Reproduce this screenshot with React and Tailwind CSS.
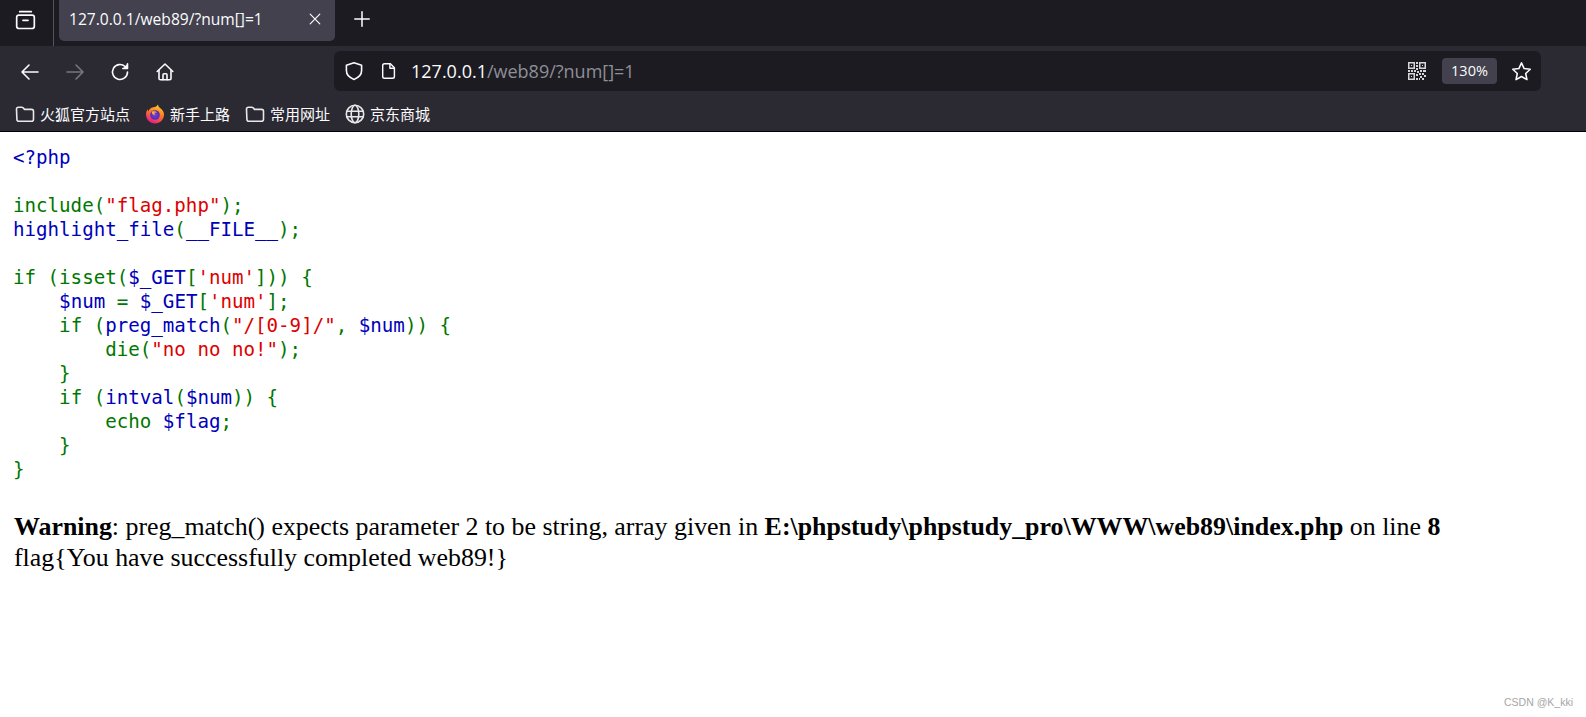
import React from 'react';

const uiFont = "font-['Open_Sans','Noto_Sans_CJK_SC',sans-serif]";

const G = ({ children }) => <span className="text-[#007700]">{children}</span>;
const B = ({ children }) => <span className="text-[#0000bb]">{children}</span>;
const R = ({ children }) => <span className="text-[#dd0000]">{children}</span>;

const Icon = ({ className = '', children, size = 20, strokeWidth = 1.6 }) => (
  <svg
    width={size}
    height={size}
    viewBox="0 0 20 20"
    fill="none"
    stroke="currentColor"
    strokeWidth={strokeWidth}
    strokeLinecap="round"
    strokeLinejoin="round"
    className={`shrink-0 ${className}`}
  >
    {children}
  </svg>
);

const FolderIcon = () => (
  <Icon className="text-[#e8e8ea]">
    <path d="M1.5 5.2c0-1.2.8-2 2-2h3.2c.6 0 1 .2 1.4.6l1.4 1.6h7c1.2 0 2 .8 2 2v7.8c0 1.2-.8 2-2 2h-12.6c-1.2 0-2-.8-2-2z" />
  </Icon>
);

const GlobeIcon = () => (
  <Icon className="text-[#e8e8ea]">
    <circle cx="10" cy="10" r="8.7" />
    <ellipse cx="10" cy="10" rx="3.8" ry="8.7" />
    <path d="M1.6 7.2h16.8M1.6 12.8h16.8" />
  </Icon>
);

const FirefoxIcon = () => (
  <svg width="20" height="20" viewBox="0 0 20 20" className="shrink-0">
    <defs>
      <linearGradient id="ffOuter" x1="0.7" y1="0" x2="0.3" y2="1">
        <stop offset="0" stopColor="#ffd12e" />
        <stop offset="0.45" stopColor="#ff7a1f" />
        <stop offset="1" stopColor="#e3168a" />
      </linearGradient>
      <radialGradient id="ffInner" cx="0.5" cy="0.5" r="0.5">
        <stop offset="0" stopColor="#7b3fe0" />
        <stop offset="1" stopColor="#4a2bb5" />
      </radialGradient>
    </defs>
    <path
      d="M13 .4c.2 2 1.4 3 2.7 4.2 1.9 1.700 3.300 3.300 3.300 6 0 5-4 9-9 9s-9-4-9-9c0-2 .6-3.800 1.700-5.300.2.900.5 1.500 1 2 .3-1.900 1.600-3 3.300-3.800C9.500 3 12.200 2.500 13 .4z"
      fill="url(#ffOuter)"
    />
    <circle cx="10" cy="11" r="4.800" fill="url(#ffInner)" />
    <path d="M6.600 7.800c2-.9 4.200-.5 5.600.9-1.200-.3-2.400-.2-3.300.4.800.200 1.100.8 1 1.400-.9.500-1.700.300-2.300-.3-.5-.7-.7-1.500-1-2.400z" fill="#ffb13b" />
  </svg>
);

const ArchiveIcon = () => (
  <Icon className="text-[#fbfbfe]" size={21}>
    <path d="M4.500 1.600h11" />
    <rect x="1.600" y="4.800" width="16.800" height="12.800" rx="2.200" />
    <path d="M7.600 9.800h4.800" />
  </Icon>
);

const QrIcon = () => (
  <svg width="18" height="18" viewBox="0 0 18 18" className="shrink-0 text-[#d6d6d8]" fill="currentColor">
    <path fillRule="evenodd" d="M0 0h7v7H0zM1.500 1.500v4h4v-4zM11 0h7v7h-7zM12.500 1.500v4h4v-4zM0 11h7v7H0zM1.500 12.500v4h4v-4z" />
    <path d="M3 3h1v1H3zM14 3h1v1h-1zM3 14h1v1H3zM8 0h2v2H8zM8 3h2v2H8zM8 6h2v2H8zM0 8h2v2H0zM3 8h2v2H3zM6 8h2v2H6zM9 9h2v2H9zM12 8h2v2h-2zM15 8h3v2h-3zM8 12h2v2H8zM11 11h2v2h-2zM14 11h2v2h-2zM16 13h2v2h-2zM12 14h2v2h-2zM8 16h2v2H8zM11 16h1v2h-1zM14 16h2v2h-2z" />
  </svg>
);

const Bookmark = ({ icon, label }) => (
  <div className="flex items-center gap-[5px]">
    {icon}
    <span className="text-[15px] leading-[20px] text-[#fbfbfe] w-max">{label}</span>
  </div>
);

function TabStrip() {
  return (
    <div className="h-[46px] bg-[#1c1b22] flex items-start">
      <div className="w-[53px] h-[41px] flex items-center justify-center pr-[2px]">
        <ArchiveIcon />
      </div>
      <div className="w-px h-[46px] bg-[#55545c]" />
      <div className="ml-[5px] w-[276px] h-[41px] bg-[#42414d] rounded-b-[5px] flex items-center pl-[10px] pr-[12px] justify-between">
        <span className="text-[15.600px] leading-[20px] text-[#fbfbfe] -mt-[3px]">127.0.0.1/web89/?num[]=1</span>
        <Icon size={16} className="text-[#fbfbfe] -mt-[3px]" strokeWidth={1.500}>
          <path d="M4 4l12 12M16 4L4 16" />
        </Icon>
      </div>
      <div className="ml-[18px] h-[38px] flex items-center">
        <Icon size={18} className="text-[#fbfbfe]" strokeWidth={1.700}>
          <path d="M10 2v16M2 10h16" />
        </Icon>
      </div>
    </div>
  );
}

function NavBar() {
  return (
    <div className="h-[50px] bg-[#2b2a33] flex items-start pt-[5px]">
      <div className="w-[334px] h-[40px] flex items-center pl-[20px] pt-[1px] gap-[25px]">
        <Icon className="text-[#fbfbfe]">
          <path d="M2 10h16M9 3l-7 7 7 7" />
        </Icon>
        <Icon className="text-[#77767e]">
          <path d="M2 10h16M11 3l7 7-7 7" />
        </Icon>
        <Icon className="text-[#fbfbfe]">
          <path d="M17.500 10a7.500 7.500 0 1 1-2.400-5.500" />
          <path d="M17.500 1.800v4.700h-4.700" fill="currentColor" />
        </Icon>
        <Icon className="text-[#fbfbfe]">
          <path d="M2.200 9.500L10 2l7.800 7.500" />
          <path d="M4 8.500v8c0 .8.500 1.300 1.300 1.300h9.400c.8 0 1.300-.5 1.300-1.300v-8" />
          <path d="M8 17.800v-5c0-.6.400-1 1-1h2c.6 0 1 .4 1 1v5" />
        </Icon>
      </div>
      <div className="w-[1207px] h-[40px] bg-[#1c1b22] rounded-[6px] flex items-center pl-[10px] pr-[9px]">
        <Icon className="text-[#fbfbfe]">
          <path d="M10 1.800l7.600 2.400v5.400c0 4.300-3 7.200-7.600 8.800-4.600-1.600-7.600-4.500-7.600-8.800V4.200z" />
        </Icon>
        <Icon size={18} className="text-[#fbfbfe] ml-[16px]">
          <path d="M5 2h6.500L16 6.500V16c0 1.200-.8 2-2 2H5c-1.200 0-2-.8-2-2V4c0-1.200.8-2 2-2z" />
          <path d="M11 2v5h5" />
        </Icon>
        <span className="ml-[13px] text-[18px] leading-[24px] text-[#fbfbfe]">
          127.0.0.1<span className="text-[#8f8f96]">/web89/?num[]=1</span>
        </span>
        <div className="ml-auto flex items-center">
          <QrIcon />
          <div className="ml-[16px] w-[55px] h-[26px] bg-[#42414d] rounded-[4px] flex items-center justify-center text-[14.500px] text-[#fbfbfe]">
            130%
          </div>
          <Icon size={21} className="text-[#fbfbfe] ml-[14px]" strokeWidth={1.500}>
            <path d="M10 1.800l2.500 5.400 5.800.7-4.300 4 1.200 5.800L10 14.800l-5.200 2.900L6 11.900l-4.300-4 5.800-.7z" />
          </Icon>
        </div>
      </div>
    </div>
  );
}

function BookmarksBar() {
  return (
    <div className="h-[36px] bg-[#2b2a33] border-b border-black flex items-center pl-[15px] gap-[15px]">
      <Bookmark icon={<FolderIcon />} label="火狐官方站点" />
      <Bookmark icon={<FirefoxIcon />} label="新手上路" />
      <Bookmark icon={<FolderIcon />} label="常用网址" />
      <Bookmark icon={<GlobeIcon />} label="京东商城" />
    </div>
  );
}

function Source() {
  return (
    <pre className="-ml-px font-['DejaVu_Sans_Mono',monospace] text-[19.150px] leading-[24px] whitespace-pre">
      <B>{'<?php'}</B>{'\n\n'}
      <G>include(</G><R>"flag.php"</R><G>);</G>{'\n'}
      <B>highlight_file</B><G>(</G><B>__FILE__</B><G>);</G>{'\n\n'}
      <G>if (isset(</G><B>$_GET</B><G>[</G><R>'num'</R><G>])) {'{'}</G>{'\n'}
      {'    '}<B>$num</B> <G>=</G> <B>$_GET</B><G>[</G><R>'num'</R><G>];</G>{'\n'}
      {'    '}<G>if (</G><B>preg_match</B><G>(</G><R>"/[0-9]/"</R><G>,</G> <B>$num</B><G>)) {'{'}</G>{'\n'}
      {'        '}<G>die(</G><R>"no no no!"</R><G>);</G>{'\n'}
      {'    '}<G>{'}'}</G>{'\n'}
      {'    '}<G>if (</G><B>intval</B><G>(</G><B>$num</B><G>)) {'{'}</G>{'\n'}
      {'        '}<G>echo</G> <B>$flag</B><G>;</G>{'\n'}
      {'    '}<G>{'}'}</G>{'\n'}
      <G>{'}'}</G>
    </pre>
  );
}

export default function App() {
  return (
    <div className={`relative w-[1586px] h-[717px] overflow-hidden bg-white ${uiFont}`}>
      <TabStrip />
      <NavBar />
      <BookmarksBar />
      <div className="pl-[14px] pt-[14px]">
        <Source />
        <div className="mt-[29px] font-['Liberation_Serif',serif] text-[25.900px] leading-[31px] text-black">
          <div><b>Warning</b>: preg_match() expects parameter 2 to be string, array given in <b>E:\phpstudy\phpstudy_pro\WWW\web89\index.php</b> on line <b>8</b></div>
          <div>flag{'{'}You have successfully completed web89!{'}'}</div>
        </div>
      </div>
      <div className="absolute left-[1504px] top-[695px] text-[10.500px] leading-[14px] text-[#a6a6a6] font-['Liberation_Sans',sans-serif]">CSDN @K_kki</div>
    </div>
  );
}
